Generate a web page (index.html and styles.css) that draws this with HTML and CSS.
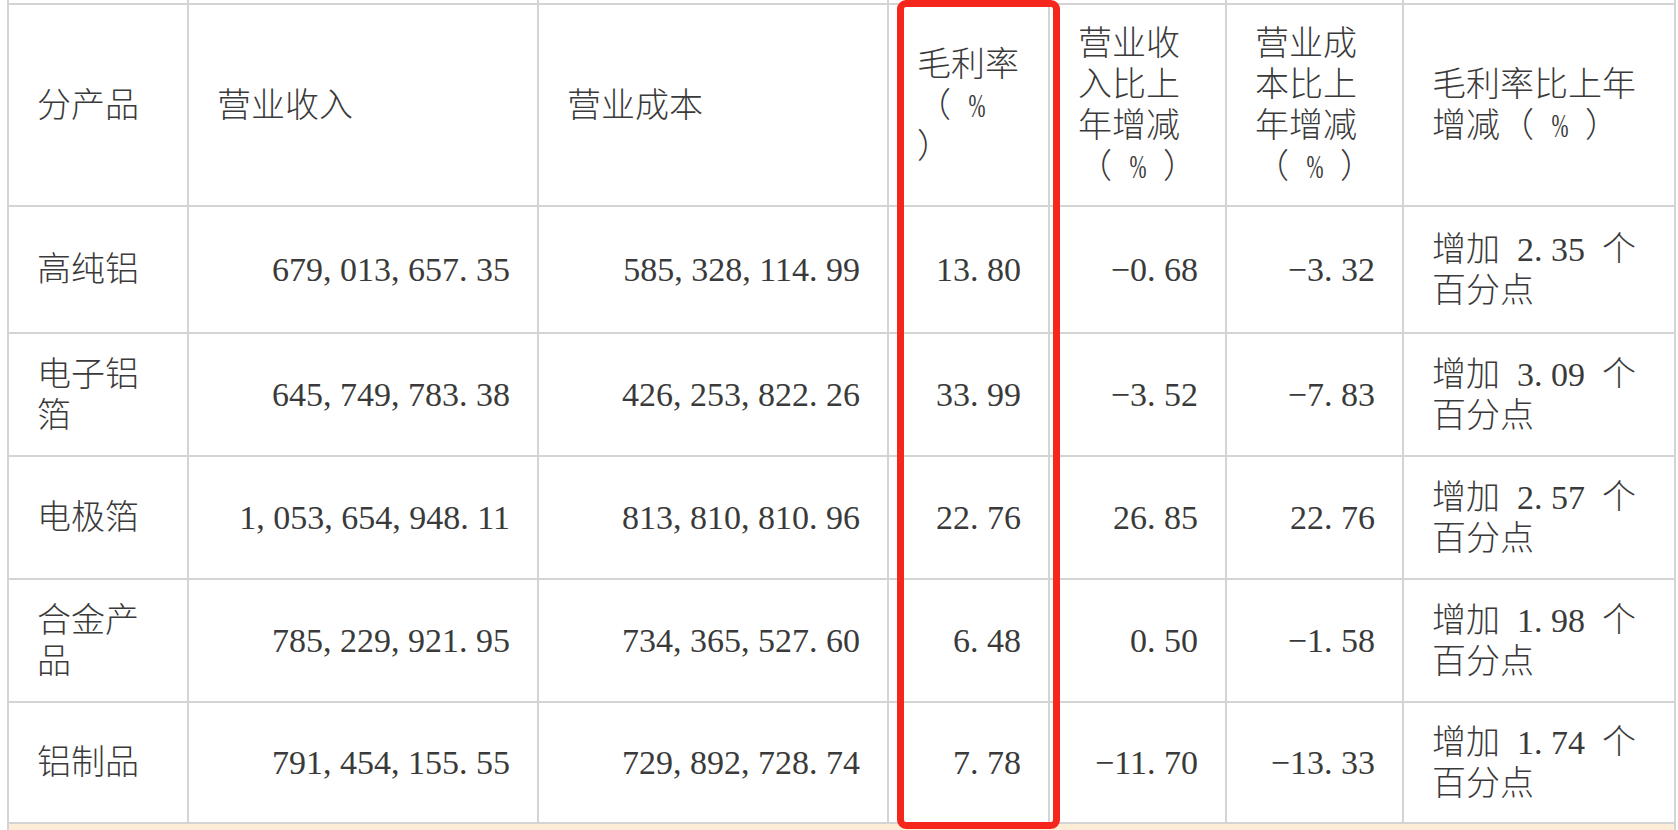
FILE: index.html
```html
<!DOCTYPE html>
<html lang="zh-CN">
<head>
<meta charset="utf-8">
<title>分产品经营情况</title>
<link rel="stylesheet" href="styles.css">
</head>
<body>
<div class="sheet">
  <table class="grid">
    <colgroup>
      <col class="c1"><col class="c2"><col class="c3"><col class="c4"><col class="c5"><col class="c6"><col class="c7">
    </colgroup>
    <tr class="stub"><td></td><td></td><td></td><td></td><td></td><td></td><td></td></tr>
    <tr class="head">
      <td>分产品</td>
      <td>营业收入</td>
      <td>营业成本</td>
      <td>毛利率<br>（&ensp;<span class="pc">%</span><br>）</td>
      <td>营业收<br>入比上<br>年增减<br>（&ensp;<span class="pc">%</span>&ensp;）</td>
      <td>营业成<br>本比上<br>年增减<br>（&ensp;<span class="pc">%</span>&ensp;）</td>
      <td>毛利率比上年<br>增减（&ensp;<span class="pc">%</span>&ensp;）</td>
    </tr>
    <tr class="row r1">
      <td>高纯铝</td>
      <td class="num">679<span class="p">,</span>013<span class="p">,</span>657<span class="p">.</span>35</td>
      <td class="num">585<span class="p">,</span>328<span class="p">,</span>114<span class="p">.</span>99</td>
      <td class="num">13<span class="p">.</span>80</td>
      <td class="num">−0<span class="p">.</span>68</td>
      <td class="num">−3<span class="p">.</span>32</td>
      <td>增加&ensp;2<span class="p">.</span>35&ensp;个<br>百分点</td>
    </tr>
    <tr class="row">
      <td>电子铝<br>箔</td>
      <td class="num">645<span class="p">,</span>749<span class="p">,</span>783<span class="p">.</span>38</td>
      <td class="num">426<span class="p">,</span>253<span class="p">,</span>822<span class="p">.</span>26</td>
      <td class="num">33<span class="p">.</span>99</td>
      <td class="num">−3<span class="p">.</span>52</td>
      <td class="num">−7<span class="p">.</span>83</td>
      <td>增加&ensp;3<span class="p">.</span>09&ensp;个<br>百分点</td>
    </tr>
    <tr class="row">
      <td>电极箔</td>
      <td class="num">1<span class="p">,</span>053<span class="p">,</span>654<span class="p">,</span>948<span class="p">.</span>11</td>
      <td class="num">813<span class="p">,</span>810<span class="p">,</span>810<span class="p">.</span>96</td>
      <td class="num">22<span class="p">.</span>76</td>
      <td class="num">26<span class="p">.</span>85</td>
      <td class="num">22<span class="p">.</span>76</td>
      <td>增加&ensp;2<span class="p">.</span>57&ensp;个<br>百分点</td>
    </tr>
    <tr class="row">
      <td>合金产<br>品</td>
      <td class="num">785<span class="p">,</span>229<span class="p">,</span>921<span class="p">.</span>95</td>
      <td class="num">734<span class="p">,</span>365<span class="p">,</span>527<span class="p">.</span>60</td>
      <td class="num">6<span class="p">.</span>48</td>
      <td class="num">0<span class="p">.</span>50</td>
      <td class="num">−1<span class="p">.</span>58</td>
      <td>增加&ensp;1<span class="p">.</span>98&ensp;个<br>百分点</td>
    </tr>
    <tr class="row r5">
      <td>铝制品</td>
      <td class="num">791<span class="p">,</span>454<span class="p">,</span>155<span class="p">.</span>55</td>
      <td class="num">729<span class="p">,</span>892<span class="p">,</span>728<span class="p">.</span>74</td>
      <td class="num">7<span class="p">.</span>78</td>
      <td class="num">−11<span class="p">.</span>70</td>
      <td class="num">−13<span class="p">.</span>33</td>
      <td>增加&ensp;1<span class="p">.</span>74&ensp;个<br>百分点</td>
    </tr>
    <tr class="note"><td colspan="7"></td></tr>
  </table>
  <div class="mark"></div>
</div>
</body>
</html>
```

FILE: styles.css
```css
html, body {
  margin: 0;
  padding: 0;
  background: #ffffff;
}
body {
  width: 1678px;
  height: 830px;
  overflow: hidden;
}
.sheet {
  position: relative;
  width: 1678px;
  height: 830px;
  overflow: hidden;
}
.grid {
  border-collapse: collapse;
  table-layout: fixed;
  width: 1669px;
  margin-left: 7px;
  font-family: "Liberation Serif", "Noto Sans CJK SC", serif;
  font-size: 34px;
  font-weight: 300;
  line-height: 41px;
  color: #3a3a3a;
}
.c1 { width: 180px; }
.c2 { width: 350px; }
.c3 { width: 350px; }
.c4 { width: 161px; }
.c5 { width: 177px; }
.c6 { width: 177px; }
.c7 { width: 272px; }
.grid td {
  border: 2px solid #d4d4d4;
  padding: 0 27px 0 28px;
  vertical-align: middle;
  text-align: left;
  white-space: nowrap;
  overflow: hidden;
}
.grid .stub td {
  height: 3px;
  padding: 0;
  border-top: none;
}
.grid .head td {
  height: 200px;
}
.grid .row td {
  height: 121px;
}
.grid .r1 td {
  height: 125px;
}
.grid .r5 td {
  height: 119px;
}
.grid td.num {
  text-align: right;
}
.grid .note td {
  height: 40px;
  background: #fdedd7;
  border-bottom: none;
}
.p {
  display: inline-block;
  width: 0.5em;
  text-align: left;
}
.pc {
  display: inline-block;
  width: 28px;
  margin: 0 -5.5px;
  text-align: center;
  font-family: "Liberation Serif", serif;
  transform: scaleX(0.6);
  vertical-align: baseline;
}
.mark {
  position: absolute;
  left: 897px;
  top: 0;
  width: 163px;
  height: 829px;
  box-sizing: border-box;
  border: 7px solid #f5261c;
  border-radius: 9px;
}
```
